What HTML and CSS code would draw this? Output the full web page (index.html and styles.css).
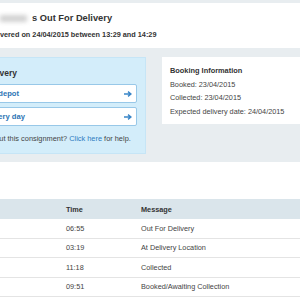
FILE: index.html
```html
<!DOCTYPE html>
<html>
<head>
<meta charset="utf-8">
<link rel="stylesheet" href="styles.css">
</head>
<body>
<div class="topbar"></div>
<header class="head">
  <h1 class="title"><span class="redact"></span>s Out For Delivery</h1>
  <p class="sub">Delivered on 24/04/2015 between 13:29 and 14:29</p>
</header>
<section class="panel">
  <div class="delivery">
    <h2 class="dhead">Delivery</h2>
    <a class="btn"><span class="btxt t1">To depot</span><svg class="arrow" width="8" height="6" viewBox="0 0 8 6"><path d="M0 3H6M4 0.6L7 3L4 5.4" fill="none" stroke="#3a86c8" stroke-width="1.4"/></svg></a>
    <a class="btn"><span class="btxt t2">Every day</span><svg class="arrow" width="8" height="6" viewBox="0 0 8 6"><path d="M0 3H6M4 0.6L7 3L4 5.4" fill="none" stroke="#3a86c8" stroke-width="1.4"/></svg></a>
    <p class="help">about this consignment? <span class="link">Click here</span> for help.</p>
  </div>
  <div class="info">
    <h3 class="ihead">Booking Information</h3>
    <p class="iline">Booked: 23/04/2015</p>
    <p class="iline">Collected: 23/04/2015</p>
    <p class="iline">Expected delivery date: 24/04/2015</p>
  </div>
</section>
<section class="history">
  <div class="grid">
    <div class="row hdr"><span>Date</span><span>Time</span><span>Message</span></div>
    <div class="row"><span>24/04/2015</span><span>06:55</span><span>Out For Delivery</span></div>
    <div class="row"><span>24/04/2015</span><span>03:19</span><span>At Delivery Location</span></div>
    <div class="row"><span>23/04/2015</span><span>11:18</span><span>Collected</span></div>
    <div class="row"><span>23/04/2015</span><span>09:51</span><span>Booked/Awaiting Collection</span></div>
  </div>
</section>
</body>
</html>
```
FILE: styles.css
```css
*{box-sizing:border-box;margin:0;padding:0}
html,body{width:300px;height:300px;overflow:hidden}
body{font-family:"Liberation Sans",Arial,Helvetica,sans-serif;color:#3a3a3a;background:#fff}
.topbar{height:3px;background:#e8edf0}
.head{height:45px;padding-top:9px;overflow:hidden}
.title{font-size:9.3px;font-weight:bold;line-height:12px;display:flex;align-items:center;color:#333}
.redact{display:inline-block;width:27px;height:7px;background:#d2d2d2;filter:blur(2px);margin-right:5px}
.sub{font-size:7.3px;font-weight:bold;line-height:10px;margin-top:6px;margin-left:-13.5px;white-space:nowrap;color:#333}
.panel{background:#e8edf0;height:114px;padding-top:9px;display:flex;align-items:flex-start;gap:16px}
.delivery{flex:none;width:166px;height:97px;margin-left:-20px;background:#d3edfa;border:1px solid #c6e5f6;padding:9px 8px 0 4px}
.dhead{font-size:8.5px;font-weight:bold;line-height:12px;margin-left:-1px;color:#333;white-space:nowrap}
.btn{display:flex;align-items:center;justify-content:space-between;height:19px;margin-left:-6px;margin-top:5px;background:#fff;border:1px solid #98c8e8;border-radius:2px;padding:0 4px 0 6px}
.btn + .btn{margin-top:4px}
.btxt{font-size:7.6px;font-weight:bold;color:#2d74b4;white-space:nowrap}
.t1{margin-left:1.5px}
.t2{margin-left:3px}
.arrow{display:block}
.help{font-size:7.4px;line-height:10px;margin-top:8px;margin-left:2px;white-space:nowrap;color:#444}
.link{color:#2d7bc0}
.info{flex:1;height:67px;background:#fff;padding:9px 8px 0 8px;margin-right:-20px}
.ihead{font-size:7.4px;font-weight:bold;line-height:10px;color:#333}
.iline{font-size:7.3px;line-height:10px;margin-top:3.5px;color:#444;white-space:nowrap}
.history{padding-top:37px}
.grid{margin-left:-100px;width:420px}
.row{display:grid;grid-template-columns:158px 75px 1fr;height:19.5px;align-items:center;border-bottom:1px solid #e4e4e4;font-size:7.3px;color:#444}
.row span{padding-left:8px;white-space:nowrap}
.hdr{background:#dae5eb;height:20px;font-weight:bold;color:#333;border-bottom:none}
```
